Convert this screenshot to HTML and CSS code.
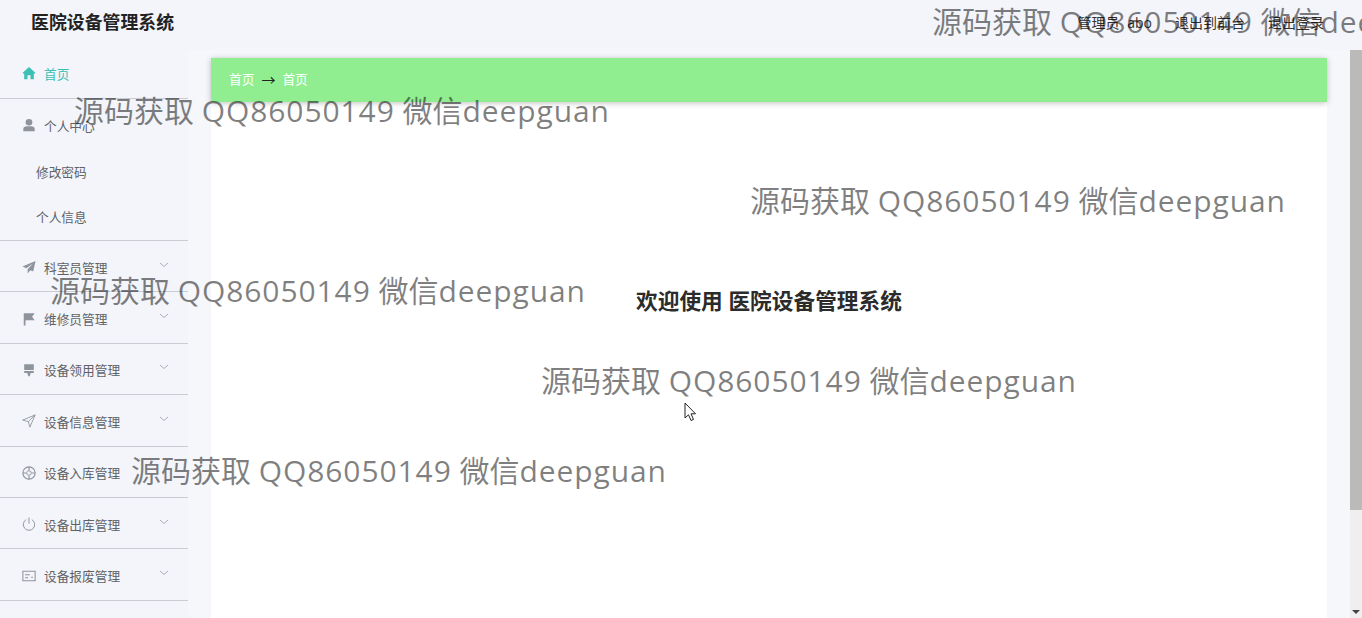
FILE: index.html
```html
<!DOCTYPE html>
<html lang="zh">
<head>
<meta charset="utf-8">
<title>医院设备管理系统</title>
<link rel="stylesheet" href="styles.css">
</head>
<body>
<div class="app">
  <header class="topbar">
    <div class="brand">医院设备管理系统</div>
    <nav class="top-links">
      <span class="admin">管理员 abo</span>
      <span>退出到前台</span>
      <span>退出登录</span>
    </nav>
  </header>
  <div class="main">
    <aside class="sidebar">
      <div class="menu-item active">
        <svg class="icon" viewBox="0 0 16 16"><path d="M8 1 .8 7.800 2 9 2.500 8.500V15H6.300V10.500H9.700V15H13.500V8.500L14 9 15.200 7.800Z" fill="currentColor"/></svg>
        <span>首页</span>
      </div>
      <div class="menu-group">
        <div class="menu-item plain">
          <svg class="icon" viewBox="0 0 16 16"><circle cx="8" cy="4.800" r="3.800" fill="currentColor"/><path d="M1.500 15V12.300C1.500 10.200 4 9.500 8 9.500S14.500 10.200 14.500 12.300V15Z" fill="currentColor"/></svg>
          <span>个人中心</span>
        </div>
        <div class="sub-item">修改密码</div>
        <div class="sub-item">个人信息</div>
      </div>
      <div class="menu-item">
        <svg class="icon" viewBox="0 0 16 16"><path d="M15.500 1 .5 7.500l4.500 2L12.500 4 6.500 10.500V15.500l3-3.700 3.300 1.400Z" fill="currentColor"/></svg>
        <span>科室员管理</span>
        <svg class="chev" viewBox="0 0 10 6"><path d="M1 1 5 4.500 9 1" fill="none" stroke="currentColor"/></svg>
      </div>
      <div class="menu-item">
        <svg class="icon" viewBox="0 0 16 16"><path d="M2 1.500H14.500L11.500 5.500 14.500 9.500H4V15.500H2Z" fill="currentColor"/></svg>
        <span>维修员管理</span>
        <svg class="chev" viewBox="0 0 10 6"><path d="M1 1 5 4.500 9 1" fill="none" stroke="currentColor"/></svg>
      </div>
      <div class="menu-item">
        <svg class="icon" viewBox="0 0 16 16"><path d="M2.500 1.500H13.500V8H2.500ZM2.500 9H13.500V11.500H10L8.800 15H7.200L6 11.500H2.500Z" fill="currentColor"/></svg>
        <span>设备领用管理</span>
        <svg class="chev" viewBox="0 0 10 6"><path d="M1 1 5 4.500 9 1" fill="none" stroke="currentColor"/></svg>
      </div>
      <div class="menu-item">
        <svg class="icon" viewBox="0 0 16 16"><path d="M15 1 .8 7 7.300 8.700 9 15ZM15 1 7.300 8.700" fill="none" stroke="currentColor"/></svg>
        <span>设备信息管理</span>
        <svg class="chev" viewBox="0 0 10 6"><path d="M1 1 5 4.500 9 1" fill="none" stroke="currentColor"/></svg>
      </div>
      <div class="menu-item">
        <svg class="icon" viewBox="0 0 16 16"><circle cx="8" cy="8" r="7" fill="none" stroke="currentColor" stroke-width="1.300"/><circle cx="8" cy="8" r="2.600" fill="none" stroke="currentColor" stroke-width="1"/><path d="M8 1V5M8 11V15M1 8H5M11 8H15" stroke="currentColor" stroke-width="1.300"/></svg>
        <span>设备入库管理</span>
      </div>
      <div class="menu-item">
        <svg class="icon" viewBox="0 0 16 16"><path d="M4.800 3A6.500 6.500 0 1 0 11.200 3M8 .5V7.500" fill="none" stroke="currentColor" stroke-width="1.100"/></svg>
        <span>设备出库管理</span>
        <svg class="chev" viewBox="0 0 10 6"><path d="M1 1 5 4.500 9 1" fill="none" stroke="currentColor"/></svg>
      </div>
      <div class="menu-item">
        <svg class="icon" viewBox="0 0 16 16"><path d="M1 2.500H15V13.500H1ZM3.500 6.500H9M3.500 10H7M10.500 9.500H12.500" fill="none" stroke="currentColor" stroke-width="1.200"/></svg>
        <span>设备报废管理</span>
        <svg class="chev" viewBox="0 0 10 6"><path d="M1 1 5 4.500 9 1" fill="none" stroke="currentColor"/></svg>
      </div>
    </aside>
    <main class="content">
      <div class="crumbs">
        <span>首页</span>
        <span class="arrow">→</span>
        <span>首页</span>
      </div>
      <h1 class="welcome">欢迎使用 医院设备管理系统</h1>
    </main>
    <div class="scrollbar">
      <div class="thumb"></div>
      <div class="track"></div>
      <div class="down"></div>
    </div>
  </div>
</div>
<div class="mark mark-1">源码获取 <span class="latin">QQ86050149</span> 微信<span class="latin">deepguan</span></div>
<div class="mark mark-2">源码获取 <span class="latin">QQ86050149</span> 微信<span class="latin">deepguan</span></div>
<div class="mark mark-3">源码获取 <span class="latin">QQ86050149</span> 微信<span class="latin">deepguan</span></div>
<div class="mark mark-4">源码获取 <span class="latin">QQ86050149</span> 微信<span class="latin">deepguan</span></div>
<div class="mark mark-5">源码获取 <span class="latin">QQ86050149</span> 微信<span class="latin">deepguan</span></div>
<div class="mark mark-6">源码获取 <span class="latin">QQ86050149</span> 微信<span class="latin">deepguan</span></div>
<svg class="cursor" viewBox="0 0 13 20"><path d="M1 1V16L4.500 12.800 7 18.500 9.500 17.400 7 11.800H11.500Z" fill="#fff" stroke="#222" stroke-width="1"/></svg>
</body>
</html>
```
FILE: styles.css
```css
* { box-sizing: border-box; }
html, body { margin: 0; height: 100%; overflow: hidden; }
body {
  position: relative;
  background: #f3f5fa;
  font-family: "Open Sans", "Noto Sans CJK SC", "Liberation Sans", sans-serif;
  color: #333;
}
.app { display: flex; flex-direction: column; width: 1362px; height: 618px; }
.topbar {
  flex: none;
  height: 50px;
  display: flex;
  align-items: center;
  justify-content: space-between;
  padding: 0 38px 8px 31px;
}
.brand { font-size: 17.900px; font-weight: 700; color: #222; line-height: 1; margin-top: 3px; }
.top-links { display: flex; gap: 23px; font-size: 14px; color: #333; line-height: 1; margin-top: 4px; }
.admin { word-spacing: 4px; }
.main { flex: 1; display: flex; min-height: 0; background: #f6f7fb; }
.sidebar { flex: none; width: 188px; font-size: 12.700px; color: #606266; background: #f3f5fa; }
.menu-item {
  height: 51.400px;
  display: flex;
  align-items: center;
  gap: 8px;
  padding: 2px 19px 0 22px;
  border-bottom: 1px solid #c9ccd3;
}
.menu-item.active { height: 49px; color: #3cc0b4; padding: 0 19px 2px 22px; }
.menu-item.plain { border-bottom: 0; height: 52px; padding: 2px 19px 2px 22px; }
.menu-group { border-bottom: 1px solid #c9ccd3; height: 142px; }
.sub-item { height: 45px; padding-left: 36px; line-height: 42px; }
.icon { flex: none; width: 14px; height: 14px; color: #8f939b; }
.active .icon { color: #3cc0b4; }
.chev { flex: none; width: 10px; height: 6px; margin: -5px 0 0 auto; color: #a9adb5; }
.content {
  flex: none;
  width: 1116px;
  margin: 0 23px 0 23px;
  padding-top: 8px;
  background: linear-gradient(transparent 0 8px, #fff 8px);
}
.crumbs {
  height: 44px;
  display: flex;
  align-items: center;
  gap: 7px;
  padding: 0 0 3px 18px;
  background: #90ee90;
  color: #fff;
  font-size: 12.700px;
  box-shadow: 0 1px 6px rgba(0, 0, 0, .25);
}
.arrow { color: #222; font-size: 14px; }
.welcome {
  margin: 184px 0 0;
  text-align: center;
  font-size: 21.700px;
  line-height: 30px;
  font-weight: 700;
  color: #2b2b2b;
}
.scrollbar { flex: none; width: 12px; display: flex; flex-direction: column; }
.thumb { height: 460px; background: #bcbab8; }
.track { flex: 1; background: #f0eeee; }
.down { height: 12px; background: #f0eeee; position: relative; }
.down::after {
  content: "";
  position: absolute;
  left: 2px;
  top: 4px;
  border: 4px solid transparent;
  border-top-color: #444;
  border-bottom: 0;
}
.mark {
  position: absolute;
  font-size: 30px;
  line-height: 40px;
  white-space: nowrap;
  color: rgba(0, 0, 0, .5);
  pointer-events: none;
}
.latin { letter-spacing: .9px; }
.mark-1 { left: 932px; top: 2px; }
.mark-2 { left: 74px; top: 91px; }
.mark-3 { left: 750px; top: 181px; }
.mark-4 { left: 50px; top: 271px; }
.mark-5 { left: 541px; top: 361px; }
.mark-6 { left: 131px; top: 451px; }
.cursor { position: absolute; left: 684px; top: 402px; width: 13px; height: 20px; }
```
